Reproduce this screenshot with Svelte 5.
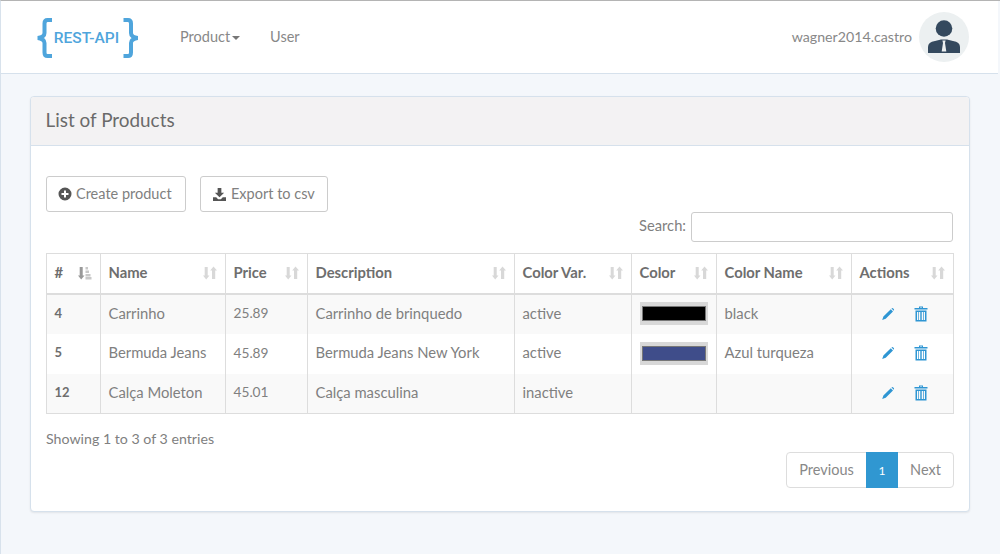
<script>
  const cols = [
    { name: '#', cls: 'c0', first: true },
    { name: 'Name', cls: 'c1' },
    { name: 'Price', cls: 'c2' },
    { name: 'Description', cls: 'c3' },
    { name: 'Color Var.', cls: 'c4' },
    { name: 'Color', cls: 'c5' },
    { name: 'Color Name', cls: 'c6' },
    { name: 'Actions', cls: 'c7' }
  ];
  const rows = [
    { id: 4, name: 'Carrinho', price: '25.89', desc: 'Carrinho de brinquedo', status: 'active', color: '#000000', colorName: 'black' },
    { id: 5, name: 'Bermuda Jeans', price: '45.89', desc: 'Bermuda Jeans New York', status: 'active', color: '#3f4d8a', colorName: 'Azul turqueza' },
    { id: 12, name: 'Calça Moleton', price: '45.01', desc: 'Calça masculina', status: 'inactive', color: '', colorName: '' }
  ];
</script>

<div class="page">
  <header class="nav">
    <a class="brand" href="#top">
      <svg class="brace" viewBox="0 0 16 40" width="16" height="40" aria-hidden="true"><path d="M15 2H10.500Q7.500 2 7.500 5.500V15Q7.500 19 .8 20Q7.500 21 7.500 25V34.500Q7.500 38 10.500 38H15" fill="none" stroke="#4fa5dc" stroke-width="4"/></svg>
      <span class="brand-text">REST-API</span>
      <svg class="brace right" viewBox="0 0 16 40" width="16" height="40" aria-hidden="true"><path d="M.5 2H5Q8 2 8 5.500V15Q8 19 14.700 20Q8 21 8 25V34.500Q8 38 5 38H.5" fill="none" stroke="#4fa5dc" stroke-width="4"/></svg>
    </a>
    <nav class="menu">
      <a href="#top">Product<i class="caret"></i></a>
      <a href="#top">User</a>
    </nav>
    <div class="user">
      <span class="uname">wagner2014.castro</span>
      <span class="avatar">
        <svg viewBox="0 0 50 50" width="50" height="50" aria-hidden="true">
          <circle cx="25" cy="16.500" r="8.300" fill="#34495e"/>
          <path d="M9 41V35Q9 30 16 29L22 27.500H28L34 29Q41 30 41 35V41Z" fill="#34495e"/>
          <path d="M23.400 28.500H26.600L26 31L27.300 39.500H22.700L24 31Z" fill="#ecf0f1"/>
        </svg>
      </span>
    </div>
  </header>

  <main class="content">
    <section class="panel">
      <h1 class="panel-head">List of Products</h1>
      <div class="panel-body">
        <div class="actions">
          <button class="btn">
            <svg class="plus" viewBox="0 0 14 14" width="14" height="14" aria-hidden="true"><path fill-rule="evenodd" d="M7 .5a6.500 6.500 0 1 0 0 13 6.500 6.500 0 0 0 0-13ZM6 3.500h2V6h2.500v2H8v2.500H6V8H3.500V6H6Z" fill="#555"/></svg>
            <span class="lbl">Create product</span>
          </button>
          <button class="btn">
            <svg viewBox="0 0 14 14" width="13" height="13" aria-hidden="true"><path d="M5 0h4v5h3L7 10 2 5h3ZM0 10h3.500l2 2h3l2-2H14v4H0Z" fill="#555"/></svg>
            <span class="lbl wide">Export to csv</span>
          </button>
        </div>
        <label class="search"><span>Search:</span><input type="text" /></label>

        <table>
          <colgroup>
            {#each cols as c}<col class={c.cls} />{/each}
          </colgroup>
          <thead>
            <tr>
              {#each cols as c}
                <th>
                  <span>{c.name}</span>
                  <svg class="sort" viewBox="0 0 14 14" width="14" height="14" aria-hidden="true">
                    <path d="M1.700 1h3v8.500H6.500L3.200 13.500 0 9.500H1.700Z" fill={c.first ? '#999' : '#d8d8d8'}/>
                    {#if c.first}
                      <path d="M7.500 1h2.500v2.500H7.500ZM7.500 4.500h3.500V7H7.500ZM7.500 8h5v2.500h-5ZM7.500 11h6v2.500h-6Z" fill="#c8c8c8"/>
                    {:else}
                      <path d="M10.500 0.500 14 4.500H12.200V13H9V4.500H7.200Z" fill="#d8d8d8"/>
                    {/if}
                  </svg>
                </th>
              {/each}
            </tr>
          </thead>
          <tbody>
            {#each rows as r}
              <tr>
                <td class="id">{r.id}</td>
                <td>{r.name}</td>
                <td class="num">{r.price}</td>
                <td>{r.desc}</td>
                <td>{r.status}</td>
                <td class="sw">
                  {#if r.color}
                    <span class="swatch"><span class="fill" style:background={r.color}></span></span>
                  {/if}
                </td>
                <td>{r.colorName}</td>
                <td class="ops">
                  <svg viewBox="0 0 14 14" width="14" height="14" aria-hidden="true"><path d="M9.800 2.200 12 4.400 4.700 11.700 1.200 12.900 2.400 9.500ZM10.700 1.300Q11.500.7 12.200 1.400L12.800 2Q13.400 2.800 12.800 3.500L12.700 3.700 10.500 1.500Z" fill="#2f96d3"/></svg>
                  <svg viewBox="0 0 14 16" width="14" height="16" aria-hidden="true"><path d="M5 .5H9V2H13.500V3.500H.5V2H5ZM6 1.500V2H8V1.500ZM1.500 4.500H12.500V15.500H1.500ZM3 6V14H4.300V6ZM5 6V14H6.300V6ZM7.700 6V14H9V6ZM9.700 6V14H11V6Z" fill-rule="evenodd" fill="#2f96d3"/></svg>
                </td>
              </tr>
            {/each}
          </tbody>
        </table>

        <div class="info">Showing 1 to 3 of 3 entries</div>
        <div class="pager-row">
          <div class="pager">
            <a href="#top">Previous</a>
            <a href="#top" class="on">1</a>
            <a href="#top">Next</a>
          </div>
        </div>
      </div>
    </section>
  </main>
</div>

<style>
  :global(body) {
    margin: 0;
    background: #f4f7fb;
  }
  .page {
    width: 1000px;
    height: 554px;
    box-sizing: border-box;
    overflow: hidden;
    border-top: 1px solid #b4b4b4;
    border-left: 1px solid #d8e2ec;
    font-family: "Lato", "Open Sans", sans-serif;
    font-size: 14.5px;
    color: #808080;
  }
  a { color: inherit; text-decoration: none; }
  .nav {
    width: 997px;
    height: 73px;
    box-sizing: border-box;
    background: #fff;
    border-bottom: 1px solid #d6e1ec;
    display: flex;
    align-items: center;
    padding: 0 29px 0 36px;
  }
  .brand {
    display: flex;
    align-items: center;
    width: 143px;
    padding-top: 1px;
  }
  .brace { flex: none; }
  .brace.right { margin-left: 3px; }
  .brand-text {
    font-family: "Roboto", sans-serif;
    font-size: 15.500px;
    font-weight: 500;
    color: #4fa5dc;
    width: 67px;
    text-align: center;
    margin: 1px 0 0 0;
    white-space: nowrap;
  }
  .menu {
    display: flex;
    gap: 30px;
    color: #888;
    margin-top: -2px;
  }
  .caret {
    display: inline-block;
    margin-left: 2px;
    vertical-align: middle;
    border-top: 4px solid #777;
    border-left: 4px solid transparent;
    border-right: 4px solid transparent;
  }
  .user {
    margin-left: auto;
    display: flex;
    align-items: center;
    gap: 7px;
    color: #888;
  }
  .uname { font-size: 14.200px; margin-top: -2px; }
  .avatar {
    width: 50px;
    height: 50px;
    border-radius: 50%;
    background: #ecf0f1;
    display: block;
  }
  .content {
    padding: 22px 29px 0;
  }
  .panel {
    width: 940px;
    height: 416px;
    box-sizing: border-box;
    background: #fff;
    border: 1px solid #d6e1ec;
    border-radius: 4px;
    box-shadow: 0 1px 2px rgba(0, 0, 0, .08);
  }
  .panel-head {
    margin: 0;
    height: 49px;
    box-sizing: border-box;
    background: #f3f2f3;
    border-bottom: 1px solid #d6e1ec;
    border-radius: 3px 3px 0 0;
    padding: 0 14.500px;
    line-height: 46px;
    font-size: 18.900px;
    font-weight: 400;
    color: #6a6a6a;
  }
  .panel-body {
    padding: 30px 16px 0 15px;
  }
  .actions {
    display: flex;
    gap: 14px;
  }
  .btn {
    height: 36px;
    box-sizing: border-box;
    background: #fff;
    border: 1px solid #ccc;
    border-radius: 3px;
    padding: 0 12px;
    font: inherit;
    color: #808080;
    display: flex;
    align-items: center;
    gap: 3px;
  }
  .plus { margin-left: -1px; margin-right: 1px; }
  .lbl { margin-top: -2px; }
  .lbl.wide { margin-left: 2px; }
  .btn:first-child { width: 140px; }
  .btn:nth-child(2) { width: 128px; }
  .search {
    display: flex;
    justify-content: flex-end;
    align-items: flex-start;
    gap: 5px;
    height: 30px;
    line-height: 27px;
    font-size: 14.700px;
  }
  .search input {
    width: 262px;
    height: 30px;
    box-sizing: border-box;
    border: 1px solid #ccc;
    border-radius: 3px;
    background: #fff;
  }
  table {
    margin-top: 11px;
    width: 907px;
    table-layout: fixed;
    border-collapse: collapse;
    border: 1px solid #ddd;
    font-size: 14.800px;
  }
  .c0 { width: 54px; }
  .c1 { width: 125px; }
  .c2 { width: 82px; }
  .c3 { width: 207px; }
  .c4 { width: 117px; }
  .c5 { width: 85px; }
  .c6 { width: 135px; }
  .c7 { width: 102px; }
  th {
    height: 40px;
    box-sizing: border-box;
    padding: 0 7px 2px 7.500px;
    border: 1px solid #ddd;
    border-bottom: 2px solid #ddd;
    text-align: left;
    font-weight: 700;
    color: #6e6e6e;
    position: relative;
  }
  .sort {
    position: absolute;
    right: 8px;
    top: 12px;
  }
  td {
    height: 40px;
    box-sizing: border-box;
    padding: 0 7px 3px 7.500px;
    border-left: 1px solid #ddd;
    border-right: 1px solid #ddd;
    white-space: nowrap;
  }
  td.sw { padding: 0 7px 1px 8px; }
  tbody tr:nth-child(odd) { background: #f9f9f9; }
  .id { font-weight: 700; color: #6e6e6e; font-size: 13px; }
  .num { font-size: 13.700px; }
  .swatch {
    display: block;
    width: 68px;
    height: 23px;
    background: #d8d8d8;
    box-sizing: border-box;
    padding: 4px 2px;
  }
  .fill {
    display: block;
    height: 15px;
    box-sizing: border-box;
    border: 1px solid #777;
  }
  .ops svg { vertical-align: middle; }
  .ops {
    padding: 0 7px 1px 29px;
    font-size: 0;
  }
  .ops svg + svg { margin-left: 19px; }
  .info {
    margin-top: 15px;
    height: 21px;
    line-height: 20px;
    font-size: 14.200px;
  }
  .pager-row {
    display: flex;
    justify-content: flex-end;
    margin-top: 2px;
    margin-right: -1px;
  }
  .pager {
    display: flex;
    height: 36px;
    box-sizing: border-box;
    border: 1px solid #ddd;
    border-radius: 4px;
    color: #888;
    line-height: 34px;
  }
  .pager a { padding: 0 12px; }
  .pager .on {
    width: 32px;
    box-sizing: border-box;
    margin: -1px 0;
    padding: 0;
    line-height: 37px;
    text-align: center;
    background: #3097d1;
    color: #fff;
    font-size: 12px;
  }
  .pager a:first-child { width: 79px; box-sizing: border-box; text-align: center; padding: 0; }
  .pager a:last-child { flex: 1; width: 55px; box-sizing: border-box; text-align: center; padding: 0; }
</style>
